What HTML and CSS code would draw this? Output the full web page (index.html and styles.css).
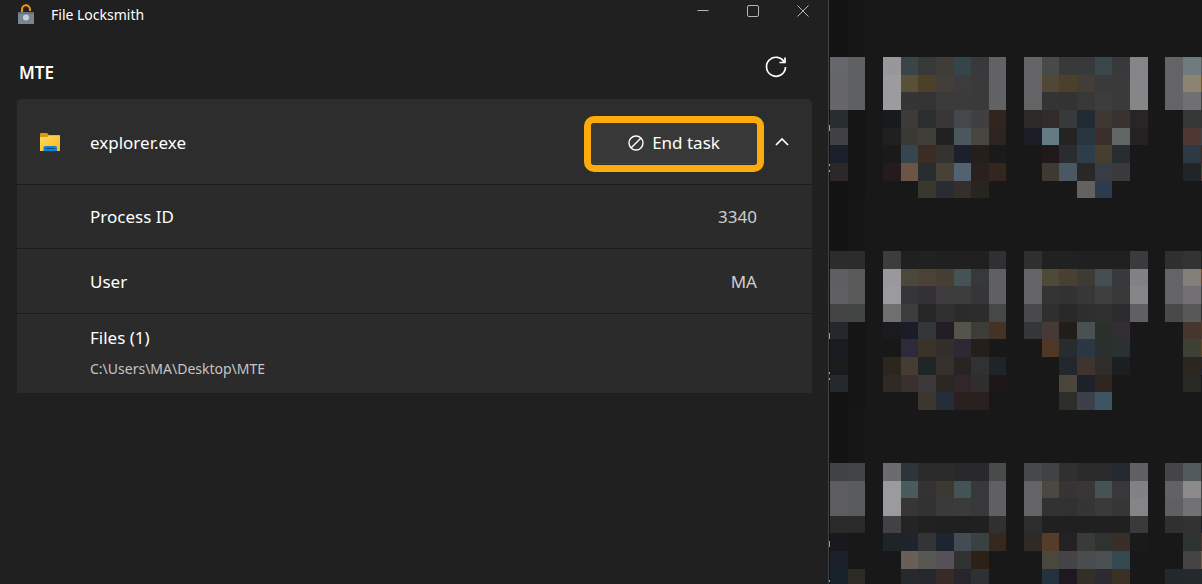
FILE: index.html
```html
<!DOCTYPE html>
<html lang="en">
<head>
<meta charset="utf-8">
<title>File Locksmith</title>
<link rel="stylesheet" href="styles.css">
</head>
<body>
<div class="screen">
  <main class="window">
    <header class="titlebar">
      <svg class="app-icon" width="18" height="22" viewBox="0 0 18 22" aria-hidden="true">
        <path d="M5 9V6A4 4.500 0 0 1 13 5.500V7" fill="none" stroke="#f0990c" stroke-width="2"/>
        <rect x="1" y="8" width="16" height="12" fill="#7b858d"/>
        <path d="M1 8h16v2H1z" fill="#68727a"/>
        <circle cx="9" cy="13.500" r="3" fill="#c3d0da"/>
      </svg>
      <span class="app-name">File Locksmith</span>
      <div class="caption-buttons">
        <button class="caption-button" type="button" aria-label="Minimize"><svg width="12" height="12" viewBox="0 0 12 12"><path d="M.5 5.500h11"/></svg></button>
        <button class="caption-button" type="button" aria-label="Maximize"><svg width="12" height="12" viewBox="0 0 12 12"><rect x=".5" y=".5" width="11" height="11" rx="1.500"/></svg></button>
        <button class="caption-button" type="button" aria-label="Close"><svg width="12" height="12" viewBox="0 0 12 12"><path d="M.5.5l11 11M11.500.5l-11 11"/></svg></button>
      </div>
    </header>
    <div class="toolbar">
      <h1 class="target-name">MTE</h1>
      <button class="icon-button" type="button" aria-label="Reload">
        <svg width="24" height="24" viewBox="0 0 24 24"><path d="M20.500 7.500A9.500 9.500 0 1 0 21.500 12M21 2.500V7.500H15.500"/></svg>
      </button>
    </div>
    <section class="card">
      <div class="process">
        <svg class="folder" width="20" height="18" viewBox="0 0 20 18" aria-hidden="true">
          <defs><linearGradient id="folder-fill" x1="0" y1="0" x2="1" y2="1"><stop offset="0" stop-color="#ffd965"/><stop offset="1" stop-color="#fbb914"/></linearGradient></defs>
          <path d="M0 1Q0 0 1 0H7L9 2H19Q20 2 20 3V8H0z" fill="#d99b0c"/>
          <path d="M0 4H7L9 2.500H20V18H0z" fill="url(#folder-fill)"/>
          <path d="M3.500 18V14.500Q3.500 13 5 13H15.500Q17 13 17 14.500V18z" fill="#1580cf"/>
          <path d="M6 15.500h8.500" stroke="#064f8c"/>
        </svg>
        <h2 class="process-name">explorer.exe</h2>
        <div class="highlight">
          <button class="end-task" type="button">
            <svg width="16" height="16" viewBox="0 0 16 16" aria-hidden="true"><circle cx="8" cy="8" r="7"/><path d="M3 13L13 3"/></svg>
            End task
          </button>
        </div>
        <button class="expander" type="button" aria-label="Hide details" aria-expanded="true">
          <svg width="14" height="10" viewBox="0 0 14 10"><path d="M1 8L7 2L13 8"/></svg>
        </button>
      </div>
      <dl class="details">
        <div class="detail"><dt>Process ID</dt><dd>3340</dd></div>
        <div class="detail"><dt>User</dt><dd>MA</dd></div>
        <div class="files"><dt>Files (1)</dt><dd>C:\Users\MA\Desktop\MTE</dd></div>
      </dl>
    </section>
  </main>
  <div class="desktop" aria-hidden="true">
    <svg class="mosaic" id="mosaic" viewBox="0 0 373 584" preserveAspectRatio="xMinYMin slice"></svg>
  </div>
</div>
<script src="mosaic.js"></script>
</body>
</html>
```
FILE: styles.css
```css
* { box-sizing: border-box; }

body {
  margin: 0;
  background: #181818;
  color: #fff;
  font: 17px/24px "Noto Sans", "Open Sans", sans-serif;
}

h1, h2, dl, dd { margin: 0; font-weight: 400; }

button {
  border: 0;
  padding: 0;
  background: none;
  color: inherit;
  font: inherit;
}

svg { display: block; }

button svg { fill: none; stroke: currentColor; }

.screen {
  display: grid;
  grid-template-columns: 829fr 373fr;
  min-height: 100vh;
}

.window {
  background: #202020;
  border-right: 1px solid #414141;
}

.titlebar {
  display: flex;
  align-items: flex-start;
  height: 48px;
  padding-left: 17px;
}

.app-icon { margin-top: 4px; }

.app-name {
  flex: 1;
  margin: 4px 0 0 16px;
  font-size: 14px;
  line-height: 22px;
}

.caption-buttons { display: flex; }

.caption-button {
  display: grid;
  place-items: center;
  width: 50px;
  height: 22px;
  color: #b5b5b5;
}

.toolbar {
  display: flex;
  align-items: flex-start;
  justify-content: space-between;
  height: 51px;
  padding: 7px 40px 0 19px;
}

.target-name {
  padding-top: 6px;
  font-size: 17px;
  font-weight: 600;
}

.icon-button svg { stroke-width: 1.7; }

.card {
  margin: 0 16px 0 17px;
  background: #2b2b2b;
  border-radius: 5px 5px 0 0;
}

.process {
  display: flex;
  align-items: center;
  height: 85px;
  padding: 4px 12px 0 23px;
  background: #2d2d2d;
  border-radius: inherit;
}

.folder { margin-bottom: 4px; }

.process-name {
  flex: 1;
  margin: 0 0 2px 30px;
  font-size: 17px;
}

.highlight {
  width: 180px;
  height: 56px;
  border: 7px solid #fbab0b;
  border-radius: 10px;
}

.end-task {
  display: flex;
  align-items: center;
  justify-content: center;
  gap: 8px;
  width: 100%;
  height: 41px;
  background: #383838;
  border-bottom: 1px solid #424242;
  border-radius: 4px;
}

.end-task svg { stroke-width: 1.4; }

.expander {
  display: grid;
  place-items: center;
  width: 36px;
  height: 36px;
  margin-bottom: 4px;
}

.expander svg { stroke-width: 1.7; }

.detail {
  display: flex;
  align-items: center;
  justify-content: space-between;
  height: 65px;
  padding: 1px 55px 0 73px;
  border-top: 1px solid #1c1c1c;
}

.detail:first-child { height: 64px; }

.detail dd { color: #cfcfcf; }

.files {
  padding: 12px 55px 12px 73px;
  border-top: 1px solid #1c1c1c;
}

.files dd {
  margin-top: 7px;
  color: #c5c5c5;
  font-size: 14px;
}

.desktop {
  position: relative;
  overflow: hidden;
  background: #181818;
}

.mosaic {
  position: absolute;
  inset: 0;
  width: 100%;
  height: 100%;
  shape-rendering: crispEdges;
}
```
FILE: mosaic.js
```js
// Blurred desktop icons: each row starts with its row number, "-" is an empty cell.
const rows = `
0 66676b 5f6061 - 98989a 3a4549 373938 403d38 364549 37393a 626264 - 646467 474b47 383a3a 38393a 3a4649 38393b 858587 - 646467 707b7d 54595a
1 666668 5f6061 - 9c9c9e 585039 4c4029 423e39 3c3c3c 3a3a3b 626264 - 646467 504737 4c402c 423d37 3a3a3a 3a3a3b 868688 - 646467 8c8371 705a30
2 666668 5f6061 - 9c9c9e 353536 343434 3b3b3b 3b3b3b 3a3a3b 626264 - 646467 343434 333333 393838 3d3d3d 3a3a3a 868688 - 646467 707072 444444
3 282d2f 151515 - 191a1c 3c3b3a 2b2d2f 383637 45484b 404040 30261f - 2d2b28 322b29 373a3b 222a33 3f3731 383230 272526 - - 363837 333333
4 414143 151515 - 212020 3b3935 3f3e38 212122 4b565d 474640 2d241f - 1b1e24 647b83 262423 29353f 3a2f2d 626666 242222 - - 4f3733 304a58
5 1a2029 151515 - 1a1a1a 374550 3b2d23 353330 1c202c 251f1a 1a1a1a - - 21181a 292d30 2f3d48 473f2d 282d2f - - - 2d3a46 4d2520
6 2d2828 151515 - 261a1e 6a5546 2a2d2f 484138 526271 2a211f 33261f - - 3e3a31 4a5863 2a2827 383c44 3a3a3c - - - 212528 4d4025
7 131313 151515 - - - 3a372f 2a2c34 342f2c 28241f - - - - - 64625f 2e3b4e
11 2b2c2b 2b2c2b - 3d3d3e 1f2020 202121 202020 202020 1f1f1f 303032 - 2f2f2f 202221 202121 202020 202020 1f1f1f 3b3b3d - 2f2f30 333334 202020
12 5f5f62 5a5a5b - 99999b 49483a 4b4136 463f34 455356 363839 606063 - 646467 4e4939 4a4032 3e3a34 425054 38393c 828284 - 646466 838079 654a25
13 606062 5a5a5b - 9b9b9d 363537 343134 3d3b3d 3e3d3e 363638 606063 - 646466 343434 333232 373638 3f3f3f 393939 868688 - 646466 727074 444444
14 434344 414442 - 707070 3d3d3d 262626 303031 2b2b2b 2c2c2c 464847 - 49494b 2f2f2f 292929 2e2e2e 303030 2c2c2f 606062 - 494949 585859 333333
15 24282c 151515 - 191b1e 1c1c28 343738 201e23 55544a 3b3d36 443226 - 33373a 453a36 211e19 495252 2a312a 322e33 - - - 453730 52382a
16 181c21 151515 - - 2f2a39 3b3328 322e2b 2b2933 251f1a - - - 4e3725 282c2e 2b3745 2a302d 2b3030 - - - 3e4035 624727
17 1a1b1d 151515 - 2c261f 463c34 202527 33302d 272423 303132 1e2528 - - - 22272d 3f342f 2e2d2c 1c1f22 - - - 2b2620 24282c
18 25292c 151515 - 302a26 3a302f 3d393b 2b2722 312629 2f2e2f 1d1718 - - - 4c453b 1d2129 302620 - - - - 2a2925 -
19 131313 151515 - - - 3b372e 242d38 2a201f 2a201f - - - - 2d2e2a 3b404b 3d5463
23 414243 424344 - 6c6c6e 2c3538 2b2b2c 2b2b2b 29292b 29292b 494b4b - 47484a 404244 303031 2b2b2c 292a2c 252a30 606062 - 454547 515a5c 333333
24 5d5d60 5a5b5d - 9b9b9d 4a5b5b 343233 3c3932 435356 38383a 606063 - 646466 4a4840 383434 383636 455355 38383a 828284 - 626264 8b8b8c 444444
25 5d5d5f 5a5b5d - 9b9b9d 363636 333233 3a3a3a 3b3b3b 38383a 606063 - 646466 323233 303131 353535 3a3a3a 363637 858587 - 606062 727274 444444
26 2a2a2b 2a2a2a - 424244 242424 212121 202020 1f1f1f 202020 303031 - 2d2d2e 202020 202020 202020 202020 202020 3a3a3a - 303030 323232 202020
27 18181d 171717 - 1f2427 1e232c 323436 1d2630 434c52 394240 35291f - 2f2a26 553d29 242125 383b38 2e3332 382e29 191b1a - - 2d3233 4d3528
28 1a212b 171717 - - 686058 595753 555157 313232 2d2116 - - - 4a473e 464348 4a4d4d 4a4f51 354850 - - - 454343 705e44
29 17222a 2d2b25 - - 262a2f 26282e 382a26 29252e 2d3134 - - - 24323e 1e1820 342e29 2d2b31 3b3024 - - 23282c 24292c 24292c
`.trim().split("\n").map((line) => line.split(" "));

const CELL = 300 / 17;
const LEFT = 1;
const TOP = 57;
const svg = document.getElementById("mosaic");

function addRect(x, y, width, height, fill) {
  const rect = document.createElementNS("http://www.w3.org/2000/svg", "rect");
  const attributes = { x, y, width, height, fill };
  for (const name in attributes) rect.setAttribute(name, attributes[name]);
  svg.append(rect);
}

// Darker strip along the window's edge.
addRect(0, 0, 19, 584, "#131313");
addRect(19, 0, 17, 584, "#161616");

for (const [index, ...cells] of rows) {
  const y = Math.round(TOP + index * CELL);
  const bottom = Math.round(TOP + (Number(index) + 1) * CELL);
  cells.forEach((color, column) => {
    if (color === "-") return;
    const x = Math.round(LEFT + column * CELL);
    const right = Math.round(LEFT + (column + 1) * CELL);
    addRect(x, y, right - x, bottom - y, "#" + color);
  });
}

// Ends of icon labels that show beside the window.
for (const y of [125, 333, 541]) {
  addRect(0, y, 1, 6, "#8b9aa0");
}
for (const y of [164, 170, 372, 378, 580]) {
  addRect(0, y, 1, 2, "#a8a394");
}
```
